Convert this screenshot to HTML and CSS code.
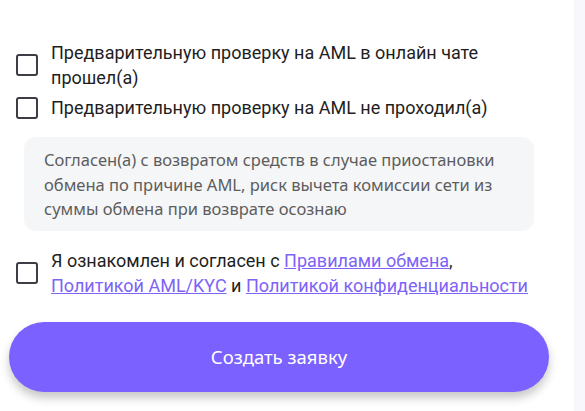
FILE: index.html
```html
<!DOCTYPE html>
<html lang="ru">
<head>
<meta charset="utf-8">
<link rel="stylesheet" href="styles.css">
</head>
<body>
<div class="page">
  <div class="main">
    <label class="check-row">
      <span class="box"></span>
      <span class="label">Предварительную проверку на AML в онлайн чате прошел(а)</span>
    </label>
    <label class="check-row row-gap">
      <span class="box"></span>
      <span class="label">Предварительную проверку на AML не проходил(а)</span>
    </label>
    <div class="notice">Согласен(а) с возвратом средств в случае приостановки обмена по причине AML, риск вычета комиссии сети из суммы обмена при возврате осознаю</div>
    <label class="check-row terms">
      <span class="box"></span>
      <span class="label">Я ознакомлен и согласен с <a href="#">Правилами обмена</a>, <a href="#">Политикой AML/KYC</a> и <a href="#">Политикой конфиденциальности</a></span>
    </label>
    <button class="submit" type="button">Создать заявку</button>
  </div>
  <div class="strip"></div>
</div>
</body>
</html>
```
FILE: styles.css
```css
html, body {
  margin: 0;
  padding: 0;
  background: #ffffff;
}
.page {
  display: flex;
  min-height: 411px;
}
.main {
  width: 574px;
  padding-top: 40px;
  box-sizing: border-box;
}
.strip {
  flex: 1;
  background: #f7f7fc;
}
.check-row {
  display: flex;
  align-items: center;
  gap: 13px;
  padding: 0 36px 0 16px;
  font-family: Roboto, "Liberation Sans", sans-serif;
  font-size: 18px;
  line-height: 25px;
  color: #1e1e1e;
}
.row-gap {
  margin-top: 5px;
}
.box {
  flex: none;
  width: 22px;
  height: 22px;
  box-sizing: border-box;
  border: 2px solid #3d3d45;
  border-radius: 3px;
}
.label a {
  color: #7d63f8;
  text-decoration: underline;
}
.notice {
  margin: 17px 0 0 24px;
  width: 510px;
  box-sizing: border-box;
  padding: 11px 20px 9px;
  background: #f5f6f8;
  border-radius: 12px;
  font-family: "Noto Sans", "Open Sans", sans-serif;
  font-size: 16.5px;
  line-height: 24.5px;
  color: #5d5d5d;
}
.terms {
  margin-top: 17px;
}
.submit {
  display: block;
  margin: 24px 0 0 9px;
  width: 540px;
  height: 70px;
  border: none;
  border-radius: 35px;
  background: #7b61ff;
  color: #ffffff;
  font-family: "Noto Sans", "Open Sans", sans-serif;
  font-size: 18.5px;
  box-shadow: 0 6px 10px rgba(0, 0, 0, 0.22);
}
```
